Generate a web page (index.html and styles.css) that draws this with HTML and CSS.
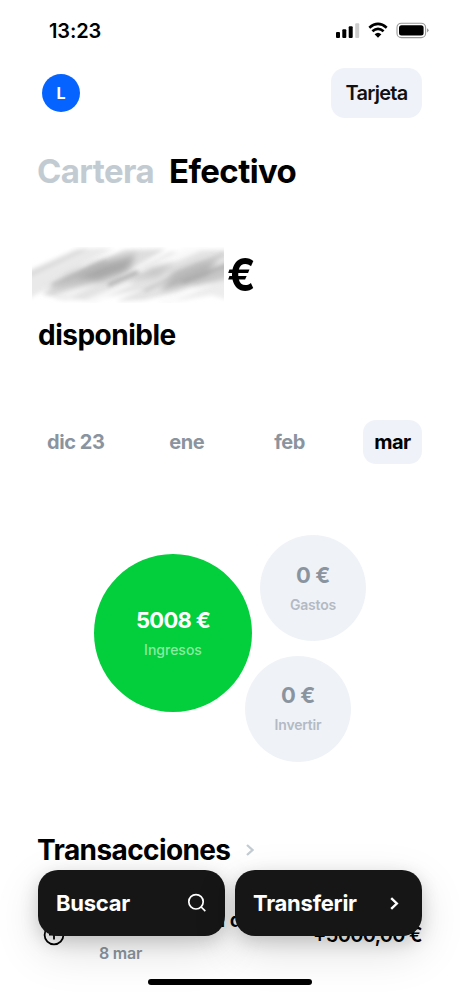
FILE: index.html
```html
<!DOCTYPE html>
<html lang="es">
<head>
<meta charset="utf-8">
<title>Efectivo</title>
<link rel="stylesheet" href="styles.css">
</head>
<body>
<div class="screen">
  <header class="status">
    <span class="time">13:23</span>
    <svg class="status-icons" width="94" height="18" viewBox="0 0 94 18">
      <rect x="0" y="10" width="4" height="6" rx="1"/>
      <rect x="6.3" y="7.2" width="4" height="8.8" rx="1"/>
      <rect x="12.7" y="4.2" width="4" height="11.8" rx="1"/>
      <rect x="19.2" y="1.2" width="4" height="14.8" rx="1" fill="#ccc"/>
      <path d="M33.3 5.7Q42 -1.8 50.7 5.7M36.4 9.2Q42 4.4 47.6 9.2" fill="none" stroke="#000" stroke-width="2.7"/>
      <path d="M38.6 12.3Q42 9.3 45.4 12.3L42 15.7Z"/>
      <rect x="61" y="1.2" width="28.6" height="14.4" rx="4.4" fill="none" stroke="#999" stroke-width="1.1"/>
      <rect x="63" y="3.2" width="24.6" height="10.4" rx="2.5"/>
      <path d="M91 6.2Q94.2 8.3 91 10.5Z" fill="#999"/>
    </svg>
  </header>
  <div class="topbar">
    <span class="avatar">L</span>
    <span class="card-btn">Tarjeta</span>
  </div>
  <nav class="tabs"><span class="tab-off">Cartera</span><span class="tab-on">Efectivo</span></nav>
  <div class="balance">
    <svg class="scribble" width="192" height="56" viewBox="0 0 192 56">
      <defs>
        <filter id="soft" x="-10%" y="-30%" width="120%" height="160%"><feGaussianBlur stdDeviation="2"/></filter>
        <filter id="softer" x="-30%" y="-60%" width="160%" height="220%"><feGaussianBlur stdDeviation="3.2"/></filter>
      </defs>
      <g filter="url(#soft)">
        <path d="M-8 26L44 2L78 1L22 38L-8 54Z" fill="#e9e9e9"/>
        <path d="M10 47L62 17L92 3L134 2L84 31L34 53Z" fill="#dedede"/>
        <path d="M22 52L92 28L138 5L182 3L200 3L200 30L150 44L112 53L84 54L112 42L62 53Z" fill="#e3e3e3"/>
        <path d="M140 55L200 29L200 54L180 48Z" fill="#ededed"/>
        <path d="M-4 25L50 2L57 2L-4 31Z" fill="#dadada"/>
        <path d="M48 18L76 2L84 2L58 17Z" fill="#f3f3f3"/>
        <path d="M102 25L154 1L176 1L112 28Z" fill="#f9f9f9"/>
        <path d="M20 50L60 34L70 35L38 51Z" fill="#f2f2f2"/>
        <path d="M50 54L94 36L104 36L62 56Z" fill="#f7f7f7"/>
        <path d="M124 55L170 34L180 34L138 57Z" fill="#fafafa"/>
      </g>
      <g filter="url(#softer)">
        <path d="M14 44L36 27L64 15L104 6L98 23L64 36L36 40Z" fill="#c1c1c1"/>
        <path d="M42 30L70 18L103 10L92 25L66 33Z" fill="#a9a9a9"/>
        <path d="M128 44L142 25L166 16L186 12L170 34Z" fill="#b5b5b5"/>
        <path d="M96 33L120 20L144 16L126 30Z" fill="#c8c8c8"/>
        <path d="M150 38L180 24L200 16V29L168 38Z" fill="#c4c4c4"/>
      </g>
      <g filter="url(#soft)" fill="none" stroke-width="2.4">
        <path d="M76 38L106 25" stroke="#8f8f8f"/>
        <path d="M20 38L74 15" stroke="#b0b0b0"/>
        <path d="M150 35L196 18" stroke="#a5a5a5"/>
        <path d="M112 44L192 7" stroke="#bebebe"/>
      </g>
    </svg>
    <span class="euro">€</span>
  </div>
  <div class="available">disponible</div>
  <div class="months"><span>dic 23</span><span class="month-ene">ene</span><span class="month-feb">feb</span><span class="month-on">mar</span></div>
  <div class="bubbles">
    <div class="bubble income"><b>5008 €</b><small>Ingresos</small></div>
    <div class="stack">
      <div class="bubble spend"><b>0 €</b><small>Gastos</small></div>
      <div class="bubble invest"><b>0 €</b><small>Invertir</small></div>
    </div>
  </div>
  <div class="section"><h2>Transacciones</h2>
    <svg width="8" height="12" viewBox="0 0 8 12" fill="none" stroke="#c3ccd3" stroke-width="2.3"><path d="M1 1L6.5 6L1 11"/></svg>
  </div>
  <div class="transaction">
    <svg class="plus" width="22" height="22" viewBox="0 0 22 22" fill="none" stroke="#000" stroke-width="1.8"><circle cx="11" cy="11" r="9.4"/><path d="M11 5.5V15.5M6 10.5H16"/></svg>
    <div class="details"><span class="name">l d</span><span class="date">8 mar</span></div>
    <span class="amount">+5000,00 €</span>
  </div>
  <footer class="actions">
    <div class="action"><span>Buscar</span>
      <svg width="20" height="20" viewBox="0 0 20 20" fill="none" stroke="#fff" stroke-width="1.7"><circle cx="9" cy="8.8" r="7.2"/><path d="M14.2 14L18.3 18.1"/></svg>
    </div>
    <div class="action"><span>Transferir</span>
      <svg class="go" width="9" height="13" viewBox="0 0 9 13" fill="none" stroke="#fff" stroke-width="2.4"><path d="M1.2 1.2L6.8 6.5L1.2 11.8"/></svg>
    </div>
  </footer>
  <div class="home"></div>
</div>
</body>
</html>
```
FILE: styles.css
```css
* { box-sizing: border-box; }
body { margin: 0; background: #fff; font-family: Inter, "Liberation Sans", sans-serif; color: #000; }
.screen { position: relative; width: 460px; height: 995px; overflow: hidden; padding: 0 38px; background: #fff; white-space: nowrap; }
.status { height: 62px; display: flex; justify-content: space-between; margin: 0 -8px 0 11px; }
.time { font-size: 20px; font-weight: 600; line-height: 24px; padding-top: 19px; letter-spacing: -0.1px; }
.status-icons { margin-top: 22px; }
.topbar { display: flex; justify-content: space-between; align-items: center; height: 62px; padding-left: 4px; }
.avatar { width: 38px; height: 38px; border-radius: 50%; background: #0564ff; color: #fff; font-size: 16px; font-weight: 700; line-height: 38px; text-align: center; }
.card-btn { width: 91px; height: 50px; border-radius: 14px; background: #eff2f8; color: #111; font-size: 20px; font-weight: 600; line-height: 50px; text-align: center; letter-spacing: -0.75px; }
.tabs { display: flex; gap: 15px; height: 94px; padding-top: 27px; font-size: 33px; line-height: 40px; font-weight: 700; letter-spacing: -0.6px; margin-left: -1px; }
.tab-off { color: #c3cbd2; }
.balance { display: flex; height: 98px; margin-left: -6px; padding-top: 29px; }
.scribble { flex: none; }
.euro { font-size: 45px; font-weight: 700; line-height: 56px; margin-left: 3px; transform: scaleX(.93); transform-origin: left; }
.available { height: 104px; font-size: 28px; line-height: 38px; font-weight: 700; letter-spacing: -0.5px; }
.months { display: flex; justify-content: space-between; height: 44px; padding-left: 9px; line-height: 44px; font-size: 20px; font-weight: 700; color: #8a949f; letter-spacing: -0.45px; }
.month-on { width: 59px; border-radius: 13px; background: #eff2f8; color: #000; text-align: center; margin-left: -8px; letter-spacing: -0.5px; }
.month-ene { margin-right: 2px; margin-left: -2px; }
.month-feb { margin-left: 1px; margin-right: -1px; }
.bubbles { display: flex; margin: 71px 0 0 56px; height: 295px; }
.bubble { border-radius: 50%; display: flex; flex-direction: column; align-items: center; justify-content: center; background: #eff2f7; color: #8a949f; }
.bubble b { font-size: 22px; line-height: 28px; font-weight: 700; letter-spacing: -0.3px; }
.bubble small { font-size: 14px; line-height: 20px; font-weight: 600; color: #b3bac4; margin-top: 6px; margin-bottom: 1px; letter-spacing: -0.2px; }
.income { width: 158px; height: 158px; margin-top: 19px; background: #03ce3b; color: #fff; }
.bubble.income b { letter-spacing: -0.7px; }
.bubble.income small { color: #88eca2; font-weight: 500; letter-spacing: 0; }
.stack { display: flex; flex-direction: column; gap: 14.5px; }
.spend, .invest { width: 106px; height: 106px; }
.spend { margin-left: 8px; }
.invest { margin-left: -7px; }
.section { display: flex; align-items: center; gap: 16px; height: 40px; }
.section h2 { margin: 0 0 0 -1px; font-size: 28px; line-height: 40px; font-weight: 700; letter-spacing: -0.6px; }
.transaction { display: flex; height: 90px; padding-top: 38px; }
.plus { flex: none; margin: 16px 0 0 5px; }
.details { display: flex; flex-direction: column; margin-left: 34px; }
.name { font-size: 20px; line-height: 24px; font-weight: 600; padding-left: 121px; letter-spacing: -0.2px; }
.date { font-size: 16px; line-height: 24px; margin-top: 9px; font-weight: 600; color: #8a949f; letter-spacing: -0.2px; }
.amount { margin-left: auto; font-size: 20px; line-height: 24px; font-weight: 600; padding-top: 15px; letter-spacing: -0.7px; }
.actions { position: absolute; left: 38px; right: 38px; top: 870px; display: flex; gap: 10px; }
.action { flex: 1; height: 66px; border-radius: 20px; background: #161616; color: #fff; display: flex; align-items: center; justify-content: space-between; padding: 0 18px; font-size: 22px; font-weight: 700; letter-spacing: -0.25px; box-shadow: 0 6px 18px rgba(0,0,0,.17), 0 15px 46px rgba(0,0,0,.13); }
.go { margin-right: 5px; }
.home { position: absolute; left: 148px; top: 979px; width: 164px; height: 6px; border-radius: 3px; background: #000; }
```
